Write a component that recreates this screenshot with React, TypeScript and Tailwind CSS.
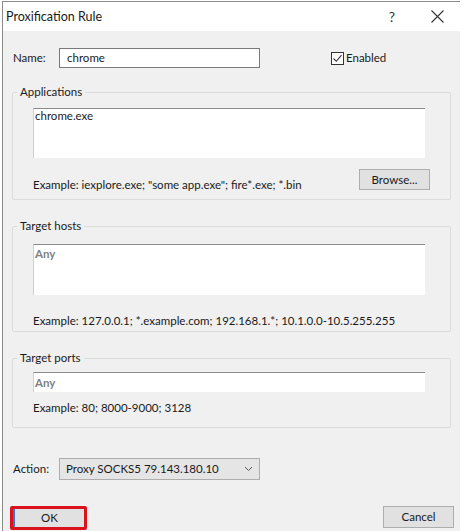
import React from "react";

const font = { fontFamily: 'Lato, "Noto Sans", sans-serif' };

function Btn({ children, className = "" }: { children: React.ReactNode; className?: string }) {
  return (
    <div
      className={
        "flex items-center justify-center bg-[#e1e1e1] border border-[#adadad] text-[11.5px] text-[#1a1a1a] " +
        className
      }
    >
      {children}
    </div>
  );
}

function Group({ title, children, className = "" }: { title: string; children: React.ReactNode; className?: string }) {
  return (
    <fieldset className={"border border-[#dcdcdc] rounded-[2px] mx-[9px] px-[20px] " + className}>
      <legend className="ml-[-16px] px-[3px] text-[11.5px] text-[#1a1a1a] leading-[14px]">{title}</legend>
      {children}
    </fieldset>
  );
}

export default function App() {
  return (
    <div className="w-[464px] h-[531px] bg-white overflow-hidden" style={font}>
      <div className="ml-[2px] mt-[1px] w-[458px] h-[530px] border-l border-t border-[#8a8a8a] flex flex-col">
        {/* title bar */}
        <div className="h-[29px] flex items-center bg-white shrink-0">
          <div className="pl-[3px] pt-[2px] text-[12.5px] text-[#1a1a1a]">Proxification Rule</div>
          <div className="flex-1" />
          <div className="text-[14px] text-[#333] w-[20px] text-center mr-[29px]">?</div>
          <svg width="13" height="13" viewBox="0 0 13 13" className="mr-[16px]">
            <path d="M0.5 0.5 L12.5 12.5 M12.5 0.5 L0.5 12.5" stroke="#333" strokeWidth="1.1" />
          </svg>
        </div>
        {/* body */}
        <div className="flex-1 bg-[#f0f0f0] flex flex-col">
          {/* name row */}
          <div className="flex items-center mt-[17px] h-[20px]">
            <div className="w-[56px] pl-[10px] text-[11.5px] text-[#1a1a1a]">Name:</div>
            <div className="w-[201px] h-[20px] bg-white border border-[#7a7a7a] flex items-center pl-[7px] text-[11.5px] text-[#1a1a1a]">
              chrome
            </div>
            <div className="ml-[71px] flex items-center">
              <div className="w-[13px] h-[13px] border border-[#333] bg-white flex items-center justify-center">
                <svg width="11" height="11" viewBox="0 0 11 11">
                  <path d="M1.5 5.5 L4.3 8.3 L9.5 2.2" stroke="#333" strokeWidth="1.1" fill="none" />
                </svg>
              </div>
              <span className="ml-[2px] text-[11.5px] text-[#1a1a1a]">Enabled</span>
            </div>
          </div>

          {/* Applications */}
          <Group title="Applications" className="mt-[17px] h-[115px]">
            <div className="mt-[9px] w-[392px] h-[50px] bg-white border-t border-[#8a8a8a] border-l border-l-[#cfcfcf] pl-[1px] text-[11.5px] leading-[14px] text-[#1a1a1a]">
              chrome.exe
            </div>
            <div className="flex items-center mt-[11px] h-[21px]">
              <div className="text-[11.5px] text-[#1a1a1a] mt-[10px]">
                Example: iexplore.exe; "some app.exe"; fire*.exe; *.bin
              </div>
              <div className="flex-1" />
              <Btn className="w-[71px] h-[21px]">Browse...</Btn>
            </div>
          </Group>

          {/* Target hosts */}
          <Group title="Target hosts" className="mt-[19px] h-[113px]">
            <div className="mt-[11px] w-[392px] h-[51px] bg-white border-t border-[#8a8a8a] border-l border-l-[#cfcfcf] pl-[1px] text-[11.5px] leading-[14px] font-bold text-[#808080] pt-[2px]">
              Any
            </div>
            <div className="mt-[17px] text-[11.5px] text-[#1a1a1a]">
              Example: 127.0.0.1; *.example.com; 192.168.1.*; 10.1.0.0-10.5.255.255
            </div>
          </Group>

          {/* Target ports */}
          <Group title="Target ports" className="mt-[19px] h-[77px]">
            <div className="mt-[7px] w-[392px] h-[20px] bg-white border-t border-[#8a8a8a] border-l border-l-[#cfcfcf] pl-[1px] flex items-center text-[11.5px] font-bold text-[#808080]">
              Any
            </div>
            <div className="mt-[7px] text-[11.5px] text-[#1a1a1a]">Example: 80; 8000-9000; 3128</div>
          </Group>

          {/* Action */}
          <div className="flex items-center mt-[30px] h-[22px]">
            <div className="w-[56px] pl-[10px] text-[11.5px] text-[#1a1a1a]">Action:</div>
            <div className="w-[201px] h-[22px] bg-[#e5e5e5] border border-[#adadad] flex items-center pl-[6px] pr-[6px] text-[11.5px] text-[#1a1a1a]">
              <span className="flex-1">Proxy SOCKS5 79.143.180.10</span>
              <svg width="9" height="6" viewBox="0 0 9 6">
                <path d="M1 1 L4.5 4.5 L8 1" stroke="#555" strokeWidth="1" fill="none" />
              </svg>
            </div>
          </div>

          {/* buttons */}
          <div className="flex items-start mt-[26px] pl-[7px] pr-[6px]">
            <div className="border-[3px] border-[#d9121c] rounded-[2px]">
              <div className="w-[71px] h-[18px] bg-[#e1e1e1] border-l-2 border-[#3a74c4] flex items-center justify-center text-[11.5px] text-[#1a1a1a]">
                OK
              </div>
            </div>
            <div className="flex-1" />
            <Btn className="w-[71px] h-[22px]">Cancel</Btn>
          </div>
        </div>
      </div>
    </div>
  );
}
